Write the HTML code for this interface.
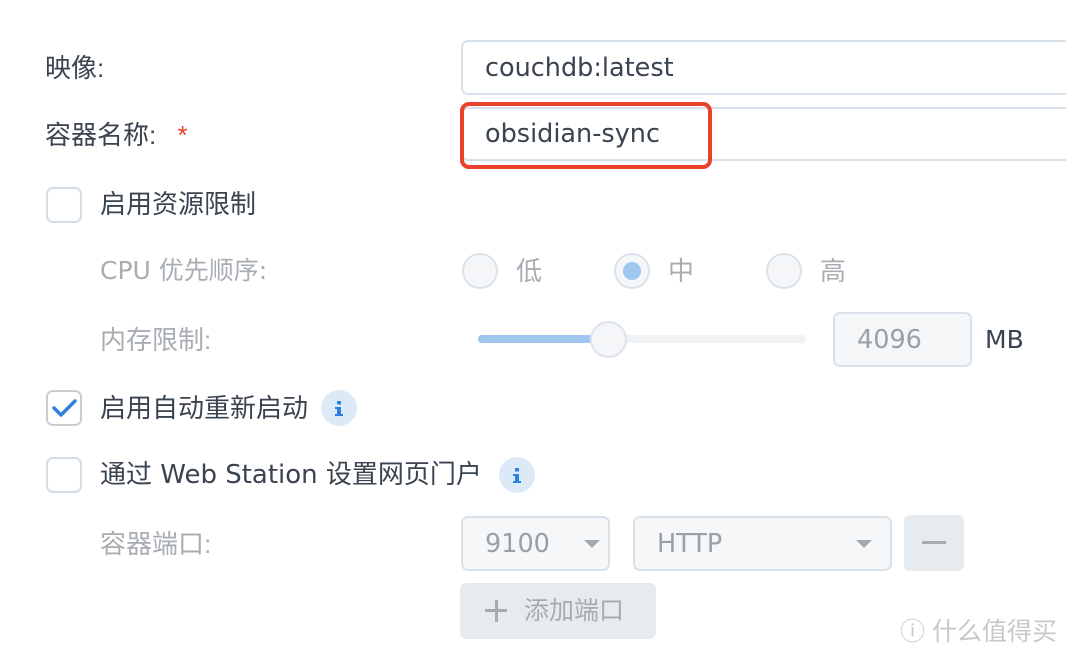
<!DOCTYPE html>
<html><head><meta charset="utf-8"><style>
*{box-sizing:border-box;margin:0;padding:0}
body{width:1066px;height:654px;background:#fff;position:relative;overflow:hidden;font-family:"Liberation Sans","Noto Sans CJK SC",sans-serif;color:#3a4350}
.a{position:absolute;white-space:nowrap}
.t{font-size:26px;line-height:30px}
.g{color:#a8adb3}
.dj{font-family:"DejaVu Sans","Noto Sans CJK SC",sans-serif;font-size:25px}
.inp{position:absolute;border:2px solid #d9e2eb;border-radius:7px;background:#fff;padding-left:22px;display:flex;align-items:center;font-family:"DejaVu Sans",sans-serif;font-size:25.5px}
.dis{background:#f5f7f9;color:#9aa0a6}
.cb{position:absolute;width:36px;height:36px;border:2px solid #d5dde5;border-radius:7px;background:#fff}
.rd{position:absolute;width:36px;height:36px;border:2px solid #dce3ea;border-radius:50%;background:#f4f6f8}
.info{position:absolute;width:36px;height:36px;border-radius:50%;background:#dceaf8}
.caret{position:absolute;width:0;height:0;border-left:8px solid transparent;border-right:8px solid transparent;border-top:8px solid #a6abb1}
</style></head><body>
<div class="a t" style="left:45px;top:53px">映像:</div>
<div class="inp" style="left:461px;top:40px;width:640px;height:55px">couchdb:latest</div>
<div class="a t" style="left:45px;top:120px">容器名称: <span style="color:#e8412c;margin-left:14px">*</span></div>
<div class="inp" style="left:461px;top:107px;width:640px;height:54px">obsidian-sync</div>
<div class="a" style="left:460px;top:102px;width:252px;height:67px;border:4px solid #e8412c;border-radius:9px"></div>

<div class="cb" style="left:46px;top:187px"></div>
<div class="a t" style="left:100px;top:189px">启用资源限制</div>

<div class="a t g dj" style="left:100px;top:256px">CPU 优先顺序:</div>
<div class="rd" style="left:462px;top:253px"></div><div class="a t g" style="left:516px;top:256px">低</div>
<div class="rd" style="left:614px;top:253px"><div style="position:absolute;left:7px;top:7px;width:18px;height:18px;border-radius:50%;background:#9fc6ee"></div></div><div class="a t g" style="left:668px;top:256px">中</div>
<div class="rd" style="left:766px;top:253px"></div><div class="a t g" style="left:820px;top:256px">高</div>

<div class="a t g" style="left:100px;top:325px">内存限制:</div>
<div class="a" style="left:478px;top:335px;width:328px;height:8px;border-radius:4px;background:#f1f2f4"></div>
<div class="a" style="left:478px;top:335px;width:130px;height:8px;border-radius:4px;background:#9fc6ee"></div>
<div class="a" style="left:590px;top:321px;width:37px;height:37px;border-radius:50%;border:2px solid #dce3ea;background:#f4f6f8"></div>
<div class="inp dis" style="left:833px;top:312px;width:139px;height:55px">4096</div>
<div class="a t dj" style="left:985px;top:325px">MB</div>

<div class="cb" style="left:46px;top:390px;border-color:#c9ced4"><svg width="32" height="32" viewBox="0 0 32 32" style="position:absolute;left:0;top:0"><path d="M6 16 L13 23 L27 9" fill="none" stroke="#2f7fe0" stroke-width="3.5" stroke-linecap="round" stroke-linejoin="round"/></svg></div>
<div class="a t" style="left:100px;top:393px">启用自动重新启动</div>
<div class="info" style="left:321px;top:390px"><svg width="36" height="36"><rect x="16" y="11" width="4" height="3.5" fill="#2f7fe0"/><path d="M14 17h6v7h2v2h-8v-2h2v-5h-2z" fill="#2f7fe0"/></svg></div>

<div class="cb" style="left:46px;top:457px"></div>
<div class="a t dj" style="left:100px;top:460px;font-size:26px">通过 Web Station 设置网页门户</div>
<div class="info" style="left:499px;top:457px"><svg width="36" height="36"><rect x="16" y="11" width="4" height="3.5" fill="#2f7fe0"/><path d="M14 17h6v7h2v2h-8v-2h2v-5h-2z" fill="#2f7fe0"/></svg></div>

<div class="a t g" style="left:100px;top:529px">容器端口:</div>
<div class="inp dis" style="left:461px;top:516px;width:149px;height:55px">9100</div>
<div class="caret" style="left:584px;top:540px"></div>
<div class="inp dis" style="left:633px;top:516px;width:259px;height:55px">HTTP</div>
<div class="caret" style="left:856px;top:540px"></div>
<div class="a" style="left:904px;top:515px;width:60px;height:56px;border-radius:6px;background:#e6ebf0"><div style="position:absolute;left:18px;top:26px;width:24px;height:3px;background:#a6abb1"></div></div>
<div class="a" style="left:460px;top:583px;width:196px;height:56px;border-radius:6px;background:#e6ebf0;color:#a6abb1;font-size:25px;line-height:56px">
<div style="position:absolute;left:25px;top:26px;width:22px;height:3px;background:#a6abb1"></div>
<div style="position:absolute;left:34.5px;top:17px;width:3px;height:22px;background:#a6abb1"></div>
<span style="position:absolute;left:64px">添加端口</span></div>
<div class="a" style="left:900px;top:612px;font-size:25px;color:#c8c8c8">ⓘ 什么值得买</div>
</body></html>
